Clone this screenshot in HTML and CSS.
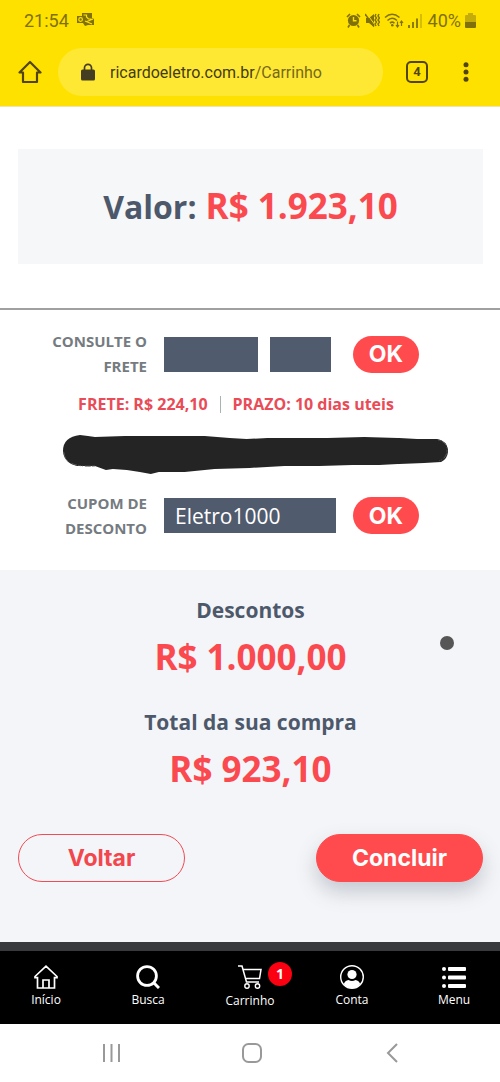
FILE: index.html
```html
<!DOCTYPE html>
<html lang="pt-BR">
<head>
<meta charset="utf-8">
<meta name="viewport" content="width=device-width, initial-scale=1">
<title>Carrinho</title>
<link rel="stylesheet" href="styles.css">
</head>
<body>
<header class="browser">
  <div class="status">
    <span class="status-time">21:54</span>
    <svg class="status-mail" width="17" height="14" viewBox="0 0 17 14" aria-hidden="true"><path d="M5 0h10v5l2 1v6h-6l-3 1-2-3H0V3h5z" fill="#80700a"/><path d="M6.500 2h3v2l2 2 3 0M8 8l7 3M16 6l-6 2.500" fill="none" stroke="#ffe100" stroke-width="1.200"/><circle cx="3.600" cy="6.500" r="1.800" fill="none" stroke="#ffe100" stroke-width="1.200"/></svg>
    <span class="status-right">
      <svg width="15" height="15" viewBox="0 0 15 15" aria-hidden="true"><circle cx="7.500" cy="7.500" r="5.600" fill="#80700a"/><path d="M1 4l3-3M14 4l-3-3M3.500 12L2 14.500M11.500 12l1.500 2.500" stroke="#80700a" stroke-width="1.600"/><path d="M7.500 4v3.700h3" fill="none" stroke="#ffe100" stroke-width="1.400"/></svg>
      <svg width="15" height="15" viewBox="0 0 15 15" aria-hidden="true"><path d="M1 5h3l5-4v13l-5-4H1z" fill="#80700a"/><path d="M2 1l8 11" stroke="#ffe100" stroke-width="1"/><path d="M0 1l9 12.500" stroke="#80700a" stroke-width="1.600"/><path d="M11 1l-1 2 1.500 2-1.500 2 1.500 2-1.500 2 1 2M14 1l-1 2 1.500 2L13 7l1.500 2L13 11l1 2" fill="none" stroke="#80700a" stroke-width="1.400"/></svg>
      <svg class="status-wifi" width="20" height="15" viewBox="0 0 20 15" aria-hidden="true"><path d="M1 4.500Q8 -2 15.500 4.500M3.500 7.500Q8 3 13 7.500M6 10.200Q8 8 10.500 10.200" fill="none" stroke="#80700a" stroke-width="1.500"/><circle cx="8.300" cy="12.300" r="1.300" fill="#80700a"/><path d="M13.500 8.500v5M12 12l1.500 2L15 12M17.500 13V8.500M16 10l1.500-2L19 10" fill="none" stroke="#80700a" stroke-width="1.200"/></svg>
      <svg width="14" height="15" viewBox="0 0 14 15" aria-hidden="true"><path d="M1 12v3M5 9v6M9 5.500V15" stroke="#80700a" stroke-width="1.800"/><path d="M13 1v14" stroke="#c8b108" stroke-width="1.500"/></svg>
      <span class="status-battery">40%</span>
      <svg width="11" height="15" viewBox="0 0 11 15" aria-hidden="true"><path d="M3 0h5v2h2q1 0 1 1v6H0V3q0-1 1-1h2z" fill="#c4ad08"/><path d="M0 9h11v5q0 1-1 1H1q-1 0-1-1z" fill="#80700a"/></svg>
    </span>
  </div>
  <div class="toolbar">
    <button class="icon-button" type="button" aria-label="Página inicial"><svg width="24" height="24" viewBox="0 0 24 24" aria-hidden="true"><path d="M1.500 12.500L12 2l10.500 10.500H19V22H5v-9.500z" fill="none" stroke="#51450d" stroke-width="2.200" stroke-linejoin="round"/></svg></button>
    <a class="address" href="#"><svg width="14" height="18" viewBox="0 0 14 18" aria-hidden="true"><path d="M3.500 8V4.800a3.500 3.500 0 0 1 7 0V8" fill="none" stroke="#443d22" stroke-width="1.700"/><rect y="6.500" width="14" height="11" rx="1.500" fill="#443d22"/></svg><span>ricardoeletro.com.br<span class="address-path">/Carrinho</span></span></a>
    <button class="tabs" type="button" aria-label="4 abas abertas">4</button>
    <button class="icon-button" type="button" aria-label="Mais opções"><svg width="6" height="20" viewBox="0 0 6 20" aria-hidden="true"><g fill="#51450d"><circle cx="3" cy="2.800" r="2.500"/><circle cx="3" cy="10" r="2.500"/><circle cx="3" cy="17.200" r="2.500"/></g></svg></button>
  </div>
</header>

<main>
  <section class="subtotal"><p class="amount"><span class="amount-label">Valor:</span> R$ 1.923,10</p></section>

  <section class="options">
    <form class="option">
      <label class="option-label" for="cep">CONSULTE O FRETE</label>
      <div class="option-fields">
        <input class="field field-cep" id="cep" type="text">
        <input class="field field-suffix" type="text" aria-label="Complemento do CEP">
      </div>
      <button class="ok" type="button">OK</button>
    </form>
    <p class="shipping"><span>FRETE: R$ 224,10</span><span class="shipping-divider"></span><span>PRAZO: 10 dias uteis</span></p>
    <svg class="scribble" viewBox="0 0 386 40" aria-hidden="true"><path d="M17 1L25 2 32 3 62 2 102 2 142 2 167 4 184 5 205 4 232 4 265 4 302 3 337 4 355 5 375 5Q385 7 386 16 386 25 379 28L362 29 337 30 317 31 290 31 257 32 222 32 187 34 152 35 122 38 96 38 88 40 77 38 64 36 50 35 43 36 32 32 14 32Q1 29 0 17 0 3 17 1z" fill="#242424"/><path d="M376 6Q385 8 385 16T377 27M32 32Q0 34 1 17" fill="none" stroke="#555" stroke-width="1" stroke-dasharray="3 1 6 2 1 1"/></svg>
    <form class="option">
      <label class="option-label" for="cupom">CUPOM DE DESCONTO</label>
      <div class="option-fields"><input class="field" id="cupom" type="text" value="Eletro1000"></div>
      <button class="ok" type="button">OK</button>
    </form>
  </section>

  <section class="summary">
    <h2 class="summary-title">Descontos</h2>
    <p class="amount">R$ 1.000,00</p>
    <h2 class="summary-title">Total da sua compra</h2>
    <p class="amount">R$ 923,10</p>
    <div class="actions">
      <button class="action" type="button">Voltar</button>
      <button class="action action-primary" type="button">Concluir</button>
    </div>
    <span class="touch-dot"></span>
  </section>
</main>

<nav class="site-nav">
  <a class="nav-item" href="#"><svg width="24" height="24" viewBox="0 0 24 24" aria-hidden="true"><path d="M1 11.500L12 1.200l11 10.300v1.200h-2.500V23H3.500V12.700H1zM9 23v-8h6v8" fill="none" stroke="#fff" stroke-width="1.700"/></svg>Início</a>
  <a class="nav-item" href="#"><svg width="24" height="24" viewBox="0 0 24 24" aria-hidden="true"><circle cx="11" cy="11" r="9.400" fill="none" stroke="#fff" stroke-width="2.800"/><path d="M17.500 17.500L23 23" stroke="#fff" stroke-width="3"/></svg>Busca</a>
  <a class="nav-item nav-cart" href="#"><svg width="24" height="24" viewBox="0 0 24 24" aria-hidden="true"><path d="M0 1h4l4.500 16H21M5.200 4.500H23L21.500 13.500H7.500" fill="none" stroke="#fff" stroke-width="1.500"/><circle cx="9" cy="21" r="2.200" fill="none" stroke="#fff" stroke-width="1.400"/><circle cx="19.500" cy="21" r="2.200" fill="none" stroke="#fff" stroke-width="1.400"/></svg>Carrinho<span class="badge">1</span></a>
  <a class="nav-item" href="#"><svg width="24" height="24" viewBox="0 0 24 24" aria-hidden="true"><circle cx="12" cy="12" r="11.300" fill="none" stroke="#fff" stroke-width="1.400"/><circle cx="12" cy="9.500" r="4.600" fill="#fff"/><path d="M3.800 19Q5 15.500 8.500 15Q12 17 15.500 15Q19 15.500 20.200 19Q17 23.300 12 23.300T3.800 19z" fill="#fff"/></svg>Conta</a>
  <a class="nav-item" href="#"><svg width="24" height="24" viewBox="0 0 24 24" aria-hidden="true"><g fill="#fff"><circle cx="2" cy="4" r="2"/><circle cx="2" cy="12.500" r="2"/><circle cx="2" cy="21" r="2"/><rect x="6" y="2" width="18" height="4" rx="1"/><rect x="6" y="10.500" width="18" height="4" rx="1"/><rect x="6" y="19" width="18" height="4" rx="1"/></g></svg>Menu</a>
</nav>

<div class="system-nav">
  <button class="icon-button" type="button" aria-label="Recentes"><svg width="20" height="20" viewBox="0 0 20 20" aria-hidden="true"><path d="M2 1v18M9.500 1v18M17 1v18" stroke="#999" stroke-width="2"/></svg></button>
  <button class="icon-button" type="button" aria-label="Início"><svg width="20" height="20" viewBox="0 0 20 20" aria-hidden="true"><rect x="1" y="1" width="18" height="18" rx="5.500" fill="none" stroke="#999" stroke-width="2"/></svg></button>
  <button class="icon-button" type="button" aria-label="Voltar"><svg width="20" height="20" viewBox="0 0 20 20" aria-hidden="true"><path d="M15 1L6 10l9 9" fill="none" stroke="#999" stroke-width="2"/></svg></button>
</div>
</body>
</html>
```

FILE: styles.css
```css
* { box-sizing: border-box; }
body {
  margin: 0;
  background: #fff;
  color: #4d596b;
  font-family: "Open Sans", "Noto Sans", sans-serif;
}
p, h2 { margin: 0; }
button, input { font: inherit; }
svg { display: block; flex: none; }
a { color: inherit; text-decoration: none; }

.browser {
  padding-bottom: 10px;
  background: #ffe100;
  border-bottom: 1px solid #eee6a8;
  font-family: Roboto, sans-serif;
}
.status {
  display: flex;
  align-items: center;
  gap: 8px;
  height: 40px;
  padding: 0 24px;
  color: #80700a;
  font-size: 18px;
}
.status-right {
  display: flex;
  align-items: center;
  gap: 4px;
  margin-left: auto;
}
.status-battery { margin-left: 2px; }
.toolbar {
  display: flex;
  align-items: center;
  padding: 8px 31px 0 18px;
}
.icon-button {
  display: grid;
  place-items: center;
  padding: 0;
  border: 0;
  background: none;
}
.address {
  display: flex;
  flex: 1;
  align-items: center;
  gap: 15px;
  height: 48px;
  margin: 0 23px 0 16px;
  padding: 0 23px;
  border-radius: 24px;
  background: #ffe833;
  color: #443b14;
  font-size: 16px;
}
.address-path { color: #766817; }
.tabs {
  width: 22px;
  height: 22px;
  margin-right: 35px;
  padding: 0;
  border: 2px solid #51450d;
  border-radius: 5px;
  background: none;
  color: #51450d;
  font-size: 13px;
  font-weight: 700;
  line-height: 18px;
}

.subtotal {
  margin: 42px 17px 44px 18px;
  padding: 33px 0;
  background: #f5f7f9;
}
.amount {
  color: #fa4a50;
  font-size: 35px;
  font-weight: 700;
  line-height: 48px;
  text-align: center;
}
.amount-label { color: #4d596b; font-size: 32px; }

.options {
  padding: 19px 18px 29px;
  border-top: 2px solid #a0a0a0;
}
.option {
  display: grid;
  grid-template-columns: 129px minmax(0, 172px) 66px;
  align-items: center;
  column-gap: 17px;
}
.option-label {
  padding-left: 30px;
  color: #757b80;
  font-size: 15px;
  font-weight: 700;
  line-height: 25px;
  text-align: right;
}
.option-fields { display: flex; gap: 12px; }
.field {
  width: 100%;
  min-width: 0;
  height: 35px;
  padding: 0 11px;
  border: 0;
  border-radius: 0;
  background: #505b6e;
  color: #fff;
  font-size: 21px;
}
.field-cep { flex: 0 1 94px; }
.field-suffix { flex: 0 1 61px; }
.ok {
  height: 37px;
  padding: 0;
  border: 0;
  border-radius: 19px;
  background: #ff4b4e;
  color: #fff;
  font-family: Inter, sans-serif;
  font-size: 23px;
  font-weight: 700;
}
.shipping {
  display: flex;
  align-items: center;
  justify-content: center;
  gap: 12px;
  padding: 13px 28px 0 0;
  color: #e94b57;
  font-size: 16px;
  font-weight: 700;
  line-height: 24px;
}
.shipping-divider { width: 1px; height: 17px; background: #a9b3b5; }
.scribble {
  width: 83%;
  margin: 18px 0 17px 45px;
}

.summary {
  position: relative;
  padding: 24px 17px 60px 18px;
  background: #f4f5f8;
}
.summary-title {
  font-size: 21px;
  font-weight: 700;
  line-height: 32px;
  text-align: center;
}
.summary .amount { margin: 7px 0 25px; }
.actions {
  display: flex;
  justify-content: space-between;
  gap: 16px;
  margin-top: 41px;
}
.action {
  width: 167px;
  height: 48px;
  padding: 0;
  border: 1px solid #ef4c56;
  border-radius: 24px;
  background: transparent;
  color: #f2474d;
  font-family: Inter, sans-serif;
  font-size: 23px;
  font-weight: 700;
}
.action-primary {
  border-color: #ff4b4e;
  background: #ff4b4e;
  color: #fff;
  box-shadow: 0 10px 20px rgba(77, 89, 107, 0.28);
}
.touch-dot {
  position: absolute;
  top: 66px;
  right: 46px;
  width: 14px;
  height: 14px;
  border-radius: 50%;
  background: #565656;
}

.site-nav {
  display: flex;
  justify-content: space-between;
  padding: 14px 18px 13px;
  border-top: 9px solid #38393d;
  background: #000;
}
.nav-item {
  position: relative;
  display: flex;
  flex-direction: column;
  align-items: center;
  width: 56px;
  gap: 1px;
  color: #fff;
  font-size: 12px;
  line-height: 20px;
}
.nav-cart { gap: 2px; }
.badge {
  position: absolute;
  top: -3px;
  left: 46px;
  width: 24px;
  height: 24px;
  border-radius: 50%;
  background: #fa0010;
  font-size: 14px;
  font-weight: 700;
  line-height: 24px;
  text-align: center;
}
.system-nav {
  display: flex;
  justify-content: space-between;
  padding: 19px 98px 20px 102px;
  background: #fff;
}
```
